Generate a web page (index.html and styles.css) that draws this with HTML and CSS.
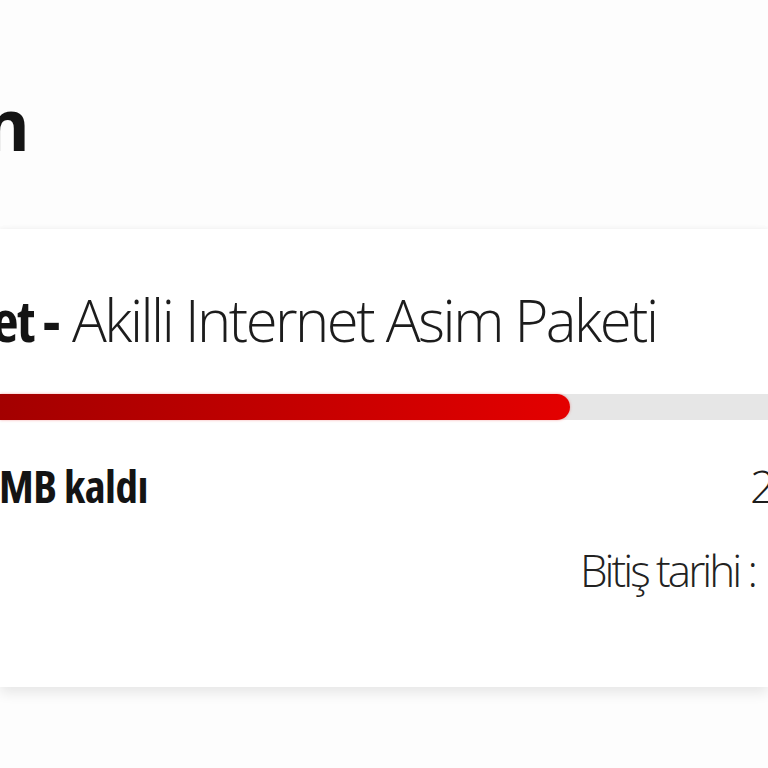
FILE: index.html
```html
<!DOCTYPE html>
<html lang="tr">
<head>
<meta charset="utf-8">
<title>Paketlerim</title>
<link rel="stylesheet" href="styles.css">
</head>
<body>
<div class="page">
  <header class="header">
    <div class="clip-left title-box"><h1 class="title">Paketlerim</h1></div>
  </header>
  <section class="card">
    <div class="pkg-line">
      <div class="clip-left pkg-bold-box"><span class="pkg-bold">İnternet -</span></div>
      <span class="pkg-name">Akilli Internet Asim Paketi</span>
    </div>
    <div class="bar">
      <div class="bar-fill" style="width: 570px"></div>
    </div>
    <div class="usage-row">
      <div class="clip-left usage-box"><span class="usage-left">250 MB kaldı</span></div>
      <div class="usage-total-box"><span class="usage-total">2 GB</span></div>
    </div>
    <div class="date-row">
      <span class="date">Bitiş tarihi :</span><span class="date-value">30.06.2023</span>
    </div>
  </section>
</div>
</body>
</html>
```

FILE: styles.css
```css
html, body {
  margin: 0;
  padding: 0;
  background: #fdfdfd;
  overflow: hidden;
  width: 768px;
  height: 768px;
}

.page {
  font-family: "Open Sans", "Liberation Sans", sans-serif;
  color: #1c1c1c;
}

.header {
  padding-top: 87px;
}

.clip-left {
  display: flex;
  justify-content: flex-end;
  white-space: nowrap;
  flex: none;
}

.title-box {
  width: 29px;
}

.title {
  margin: 0;
  font-size: 72px;
  line-height: 72px;
  font-weight: 700;
  color: #141414;
  letter-spacing: -1px;
}

.card {
  margin-top: 70px;
  background: #ffffff;
  box-shadow: 0 -2px 3px rgba(0, 0, 0, 0.025), 0 6px 12px rgba(0, 0, 0, 0.09);
  padding: 62px 0 94px 0;
}

.pkg-line {
  display: flex;
  align-items: baseline;
  white-space: nowrap;
  height: 58px;
  font-size: 58px;
  line-height: 58px;
}

.pkg-bold-box {
  width: 59px;
}

.pkg-bold {
  font-weight: 700;
  font-stretch: 85%;
  color: #141414;
  letter-spacing: -1.5px;
}

.pkg-name {
  margin-left: 13px;
  font-weight: 300;
  color: #1c1c1c;
  letter-spacing: -2.5px;
}

.bar {
  margin-top: 45px;
  height: 26px;
  background: #e6e6e6;
  display: flex;
}

.bar-fill {
  height: 26px;
  border-radius: 0 13px 13px 0;
  background: linear-gradient(90deg, #a30000 0%, #c00000 45%, #e40000 100%);
  box-shadow: 0 0 3px rgba(230, 0, 0, 0.35);
}

.usage-row {
  margin-top: 43px;
  display: flex;
  justify-content: space-between;
  height: 45px;
  font-size: 45px;
  line-height: 45px;
}

.usage-box {
  width: 148px;
}

.usage-left {
  font-weight: 700;
  font-stretch: 85%;
  color: #141414;
  letter-spacing: -0.5px;
}

.usage-total-box {
  width: 18px;
  white-space: nowrap;
}

.usage-total {
  font-weight: 300;
  color: #1c1c1c;
}

.date-row {
  margin-top: 40px;
  padding-left: 580px;
  white-space: nowrap;
  height: 45px;
  font-size: 44px;
  line-height: 45px;
}

.date {
  font-weight: 300;
  color: #222;
  letter-spacing: -3px;
}

.date-value {
  margin-left: 16px;
  font-weight: 300;
  color: #222;
}
```
